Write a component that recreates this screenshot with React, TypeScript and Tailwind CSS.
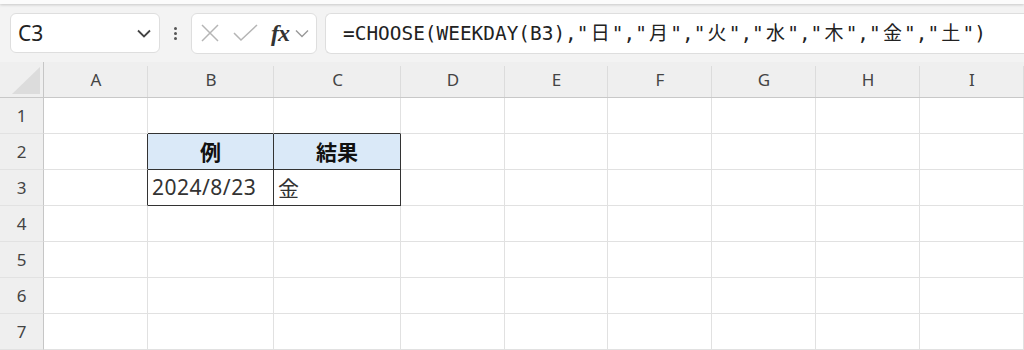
import React from "react";

const COLS = [
  { label: "A", w: 104 },
  { label: "B", w: 126 },
  { label: "C", w: 127 },
  { label: "D", w: 104 },
  { label: "E", w: 103 },
  { label: "F", w: 104 },
  { label: "G", w: 104 },
  { label: "H", w: 104 },
  { label: "I", w: 104 },
];

const ROWS = [1, 2, 3, 4, 5, 6, 7];

const FORMULA = '=CHOOSE(WEEKDAY(B3),"日","月","火","水","木","金","土")';

const cellText: Record<string, { text: string; className: string }> = {
  "B2": { text: "例", className: "justify-center font-bold text-[#111] text-[21px]" },
  "C2": { text: "結果", className: "justify-center font-bold text-[#111] text-[21px]" },
  "B3": { text: "2024/8/23", className: "justify-start pl-[4px] text-[#333] text-[21px] tracking-[0.5px]" },
  "C3": { text: "金", className: "justify-start pl-[4px] text-[#333] text-[21px]" },
};

function cellClasses(col: string, row: number) {
  // dark table border around B2:C3
  const darkRight = (row === 2 || row === 3) && (col === "A" || col === "B" || col === "C");
  const darkBottom = (col === "B" || col === "C") && row >= 1 && row <= 3;
  const blue = row === 2 && (col === "B" || col === "C");
  return [
    "flex items-center border-r border-b overflow-hidden whitespace-nowrap",
    darkRight ? "border-r-[#333]" : "border-r-[#e1e1e1]",
    darkBottom ? "border-b-[#333]" : "border-b-[#e1e1e1]",
    blue ? "bg-[#dae9f8]" : "bg-white",
  ].join(" ");
}

function FormulaText() {
  // full-width chars take two half-width cells, like the Excel formula bar
  return (
    <span
      className="text-[19.4px] text-[#222] whitespace-nowrap"
      style={{ fontFamily: '"DejaVu Sans Mono", "Noto Sans CJK JP", monospace' }}
    >
      {Array.from(FORMULA).map((ch, i) =>
        ch.charCodeAt(0) > 255 ? (
          <span
            key={i}
            className="inline-block w-[23.4px] text-center text-[19px]"
            style={{ fontFamily: '"Noto Sans CJK JP", sans-serif' }}
          >
            {ch}
          </span>
        ) : (
          <React.Fragment key={i}>{ch}</React.Fragment>
        )
      )}
    </span>
  );
}

export default function App() {
  const gridCols = `44px ${COLS.map((c) => c.w + "px").join(" ")}`;

  return (
    <div
      className="w-[1024px] h-[350px] overflow-hidden bg-[#f3f3f3] flex flex-col"
      style={{ fontFamily: '"Noto Sans", "Noto Sans CJK JP", sans-serif' }}
    >
      {/* top edge */}
      <div className="h-[4px] bg-[#fbfbfb] shadow-[0_1px_3px_rgba(0,0,0,0.18)] shrink-0" />

      {/* formula bar */}
      <div className="h-[58px] shrink-0 flex items-center">
        <div className="ml-[10px] w-[150px] h-[40px] bg-white border border-[#dedede] rounded-[6px] flex items-center pl-[7px] pr-[8px]">
          <span className="text-[21px] text-[#222] flex-1 leading-none">C3</span>
          <svg width="14" height="9" viewBox="0 0 14 9" fill="none" stroke="#444" strokeWidth="1.8">
            <path d="M1 1.5 L7 7.5 L13 1.5" />
          </svg>
        </div>
        <div className="w-[31px] flex flex-col items-center gap-[2px]">
          <div className="w-[3px] h-[3px] bg-[#555] rounded-full" />
          <div className="w-[3px] h-[3px] bg-[#555] rounded-full" />
          <div className="w-[3px] h-[3px] bg-[#555] rounded-full" />
        </div>
        <div className="w-[126px] h-[41px] bg-white border border-[#dedede] rounded-[6px] flex items-center pl-[8px]">
          <svg width="20" height="20" viewBox="0 0 20 20" fill="none" stroke="#b5b5b5" strokeWidth="1.5">
            <path d="M2 2 L18 18 M18 2 L2 18" />
          </svg>
          <svg className="ml-[13px]" width="25" height="18" viewBox="0 0 25 18" fill="none" stroke="#b5b5b5" strokeWidth="1.5">
            <path d="M1 9 L8 16 L24 1" />
          </svg>
          <span
            className="ml-[13px] text-[24px] italic font-bold text-[#333] leading-none tracking-[-1px]"
            style={{ fontFamily: '"Liberation Serif", serif' }}
          >
            fx
          </span>
          <svg className="ml-[6px]" width="14" height="9" viewBox="0 0 14 9" fill="none" stroke="#999" strokeWidth="1.4">
            <path d="M1 1.5 L7 7.5 L13 1.5" />
          </svg>
        </div>
        <div className="ml-[8px] flex-1 h-[41px] bg-white border border-[#dedede] border-r-0 rounded-l-[6px] flex items-center pl-[17px]">
          <FormulaText />
        </div>
      </div>

      {/* sheet */}
      <div className="grid flex-1" style={{ gridTemplateColumns: gridCols, gridTemplateRows: "36px repeat(7, 36px)" }}>
        {/* corner */}
        <div className="bg-[#efefef] border-r border-r-[#c6c6c6] border-b border-b-[#c8c8c8] flex items-end justify-end pr-[3px] pb-[3px]">
          <svg width="28" height="27" viewBox="0 0 28 27">
            <polygon points="28,0 28,27 0,27" fill="#dcdcdc" />
          </svg>
        </div>
        {COLS.map((c) => (
          <div
            key={c.label}
            className="bg-[#efefef] border-b border-b-[#c8c8c8] flex items-center justify-center text-[17px] text-[#444] relative"
          >
            {c.label}
            <div className="absolute right-0 top-[4px] bottom-0 w-px bg-[#dcdcdc]" />
          </div>
        ))}

        {ROWS.map((r) => (
          <React.Fragment key={r}>
            <div className="bg-[#efefef] border-r border-r-[#c6c6c6] border-b border-b-[#e2e2e2] flex items-center justify-center text-[17px] text-[#444]">
              {r}
            </div>
            {COLS.map((c) => {
              const key = `${c.label}${r}`;
              const content = cellText[key];
              return (
                <div
                  key={key}
                  className={`${cellClasses(c.label, r)} ${content ? content.className : ""}`}
                  style={{
                    fontFamily:
                      r === 3 && c.label === "B"
                        ? '"Noto Sans", sans-serif'
                        : '"Noto Sans CJK JP", sans-serif',
                  }}
                >
                  {content?.text}
                </div>
              );
            })}
          </React.Fragment>
        ))}
      </div>
    </div>
  );
}
